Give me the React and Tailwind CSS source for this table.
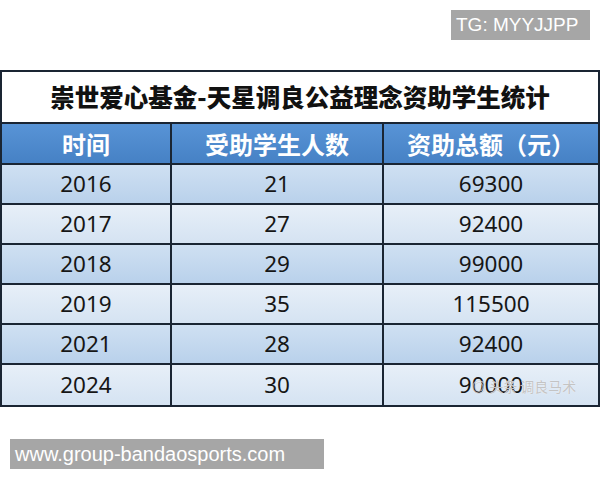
export default function App() {
  const rows = [
    ["2016", "21", "69300"],
    ["2017", "27", "92400"],
    ["2018", "29", "99000"],
    ["2019", "35", "115500"],
    ["2021", "28", "92400"],
    ["2024", "30", "90000"],
  ];
  const cjk = { fontFamily: '"Noto Sans CJK SC", "Noto Sans", sans-serif' };
  return (
    <div className="w-[600px] h-[480px] bg-white overflow-hidden">
      <div className="h-[70px] flex justify-end pt-[10px] pr-[10px]">
        <div className="h-[30px] w-[139px] bg-[#a6a6a6] text-white text-[19px] leading-[30px] pl-[5px] font-['Liberation_Sans',sans-serif]">
          TG: MYYJJPP
        </div>
      </div>
      <div className="border-2 border-[#1a2533]">
        <div
          className="h-[52px] bg-white flex items-center justify-center text-[24.5px] font-black text-[#111] border-b-2 border-[#1a2533]"
          style={cjk}
        >
          崇世爱心基金-天星调良公益理念资助学生统计
        </div>
        <div
          className="grid grid-cols-[168px_212px_1fr] h-[41px] border-b-2 border-[#1a2533] bg-gradient-to-b from-[#5894d6] to-[#4681c5] text-white text-[24px] font-bold"
          style={cjk}
        >
          <div className="flex items-center justify-center">时间</div>
          <div className="flex items-center justify-center border-l-2 border-[#1a2533]">受助学生人数</div>
          <div className="flex items-center justify-center border-l-2 border-[#1a2533]">资助总额（元）</div>
        </div>
        {rows.map((r, i) => {
          const dark = i % 2 === 0;
          const last = i === rows.length - 1;
          return (
            <div
              key={r[0]}
              className={
                "grid grid-cols-[168px_212px_1fr] h-[40px] text-[22.5px] text-[#161616] font-['Noto_Sans',sans-serif] " +
                (last ? "" : "border-b-2 border-[#1a2533] ") +
                (dark
                  ? "bg-gradient-to-b from-[#cfe0f2] to-[#b9d1eb]"
                  : "bg-gradient-to-b from-[#e7eff8] to-[#d5e3f2]")
              }
            >
              <div className="flex items-center justify-center">{r[0]}</div>
              <div className="flex items-center justify-center border-l-2 border-[#1a2533]">{r[1]}</div>
              <div className="relative flex items-center justify-center border-l-2 border-[#1a2533]">
                {r[2]}
                {last && (
                  <span
                    className="absolute left-[88px] top-[13px] text-[14px] leading-[16px] text-[#c4c4c4] [text-shadow:0_0_1px_#fff]"
                    style={cjk}
                  >
                    ◎ 头条 调良马术
                  </span>
                )}
              </div>
            </div>
          );
        })}
      </div>
      <div className="pt-[32px] pl-[10px]">
        <div className="h-[30px] w-[314px] bg-[#a6a6a6] text-white text-[20px] leading-[30px] pl-[5px] font-['Liberation_Sans',sans-serif]">
          www.group-bandaosports.com
        </div>
      </div>
    </div>
  );
}
